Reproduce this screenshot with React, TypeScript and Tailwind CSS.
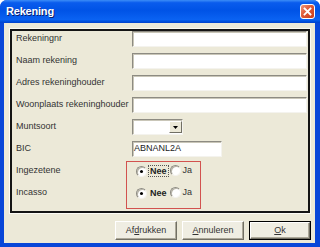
import React from "react";

const rows = [
  { label: "Rekeningnr", kind: "full" },
  { label: "Naam rekening", kind: "full" },
  { label: "Adres rekeninghouder", kind: "full" },
  { label: "Woonplaats rekeninghouder", kind: "full" },
  { label: "Muntsoort", kind: "select" },
  { label: "BIC", kind: "bic" },
];

function Edit({ className, children }: { className: string; children?: React.ReactNode }) {
  return (
    <div
      className={
        "h-[16px] bg-white border border-t-[#8d8b82] border-l-[#8d8b82] border-b-[#f4f3ee] border-r-[#f4f3ee] shadow-[inset_1px_1px_0_#c9c6b8] flex items-center " +
        className
      }
    >
      {children}
    </div>
  );
}

function Radio({ checked }: { checked?: boolean }) {
  return (
    <span className="relative inline-block w-[11px] h-[11px] shrink-0 rounded-full bg-white border border-t-[#8d8b82] border-l-[#8d8b82] border-b-[#f4f3ee] border-r-[#f4f3ee] shadow-[inset_1px_1px_0_#b8b5a8]">
      {checked && <span className="absolute left-[3px] top-[3px] w-[3px] h-[3px] rounded-full bg-black" />}
    </span>
  );
}

function RadioRow({ focus }: { focus?: boolean }) {
  return (
    <div className="h-[16px] flex items-center pl-[4px]">
      <Radio checked />
      <span
        className={
          "ml-[1px] px-[1px] leading-[10px] font-bold text-[9px] text-[#222] border border-dotted " +
          (focus ? "border-[#555]" : "border-transparent")
        }
      >
        Nee
      </span>
      <span className="ml-[1px]">
        <Radio />
      </span>
      <span className="ml-[2px] text-[9px] text-[#333]">Ja</span>
    </div>
  );
}

function Button({ children, primary }: { children: React.ReactNode; primary?: boolean }) {
  return (
    <div className={"w-[62px] h-[19px] " + (primary ? "border border-black" : "")}>
      <div className="w-full h-full flex items-center justify-center bg-[#efede2] border border-t-white border-l-white border-b-[#716f64] border-r-[#716f64] shadow-[inset_-1px_-1px_0_#aca899] text-[9px] text-[#333]">
        {children}
      </div>
    </div>
  );
}

export default function App() {
  return (
    <div className="w-[320px] h-[247px] flex flex-col bg-[#0846d8] rounded-t-[7px] overflow-hidden font-['Liberation_Sans',Arial,sans-serif]">
      <div className="h-[23px] shrink-0 flex items-center justify-between pl-[6px] pr-[5px] bg-[linear-gradient(180deg,#3c8df7,#0a5ced_12%,#0053e6_45%,#0a62f2_85%,#0052e0_92%,#0040cc)]">
        <span className="text-white font-bold text-[11px] tracking-[-0.2px] [text-shadow:1px_1px_0_#0a1f6e]">Rekening</span>
        <div className="w-[15px] h-[15px] rounded-[3px] border border-white bg-[linear-gradient(135deg,#f0967a,#de5a37_45%,#c73c1c)] flex items-center justify-center">
          <svg width="9" height="9" viewBox="0 0 9 9">
            <path d="M1.5 1.5 L7.5 7.5 M7.5 1.5 L1.5 7.5" stroke="white" strokeWidth="1.8" strokeLinecap="square" />
          </svg>
        </div>
      </div>

      <div className="flex-1 ml-[4px] mr-[5px] mb-[4px] bg-[#ece9d8] flex flex-col">
        <div className="mt-[6px] ml-[6px] mr-[5px] h-[184px] border-2 border-[#141414] shadow-[0_0_0_1px_#fbfaf4] pt-[0px] pl-[4px] pr-[1px]">
          <div className="flex flex-col gap-[6px]">
            {rows.map((r) => (
              <div key={r.label} className="grid grid-cols-[116px_1fr] items-center h-[16px]">
                <span className="text-[9px] text-[#333] whitespace-nowrap">{r.label}</span>
                {r.kind === "full" && <Edit className="w-full" />}
                {r.kind === "select" && (
                  <div className="flex">
                    <Edit className="w-[51px] justify-end">
                      <div className="w-[13px] h-[12px] bg-[#ece9d8] border border-t-white border-l-white border-b-[#716f64] border-r-[#716f64] flex items-center justify-center">
                        <svg width="5" height="3" viewBox="0 0 5 3">
                          <path d="M0 0 H5 L2.5 3 Z" fill="black" />
                        </svg>
                      </div>
                    </Edit>
                  </div>
                )}
                {r.kind === "bic" && (
                  <Edit className="w-[90px] pl-[1px]">
                    <span className="text-[9px] text-[#222]">ABNANL2A</span>
                  </Edit>
                )}
              </div>
            ))}
            <div className="relative flex flex-col gap-[6px]">
              <div className="grid grid-cols-[116px_1fr] items-center h-[16px]">
                <span className="text-[9px] text-[#333]">Ingezetene</span>
                <RadioRow focus />
              </div>
              <div className="grid grid-cols-[116px_1fr] items-center h-[16px]">
                <span className="text-[9px] text-[#333]">Incasso</span>
                <RadioRow />
              </div>
              <div className="absolute left-[110px] top-[-2px] w-[75px] h-[48px] border border-[#d2524f]" />
            </div>
          </div>
        </div>

        <div className="mt-[8px] flex justify-end gap-[5px] pr-[4px]">
          <Button>
            <span>
              Af<span className="underline">d</span>rukken
            </span>
          </Button>
          <Button>
            <span>
              <span className="underline">A</span>nnuleren
            </span>
          </Button>
          <Button primary>
            <span>
              <span className="underline">O</span>k
            </span>
          </Button>
        </div>
      </div>
    </div>
  );
}
